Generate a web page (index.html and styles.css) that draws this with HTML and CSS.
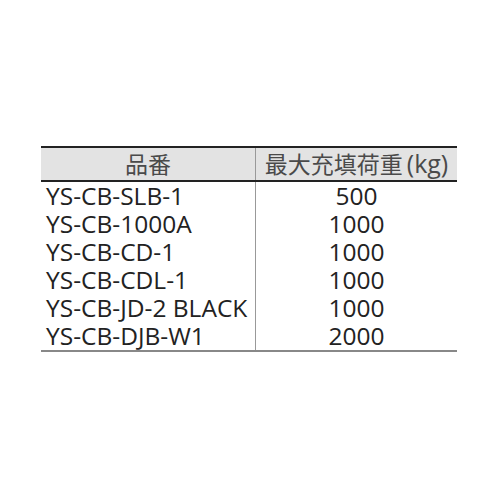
FILE: index.html
```html
<!DOCTYPE html>
<html lang="ja">
<head>
<meta charset="utf-8">
<link rel="stylesheet" href="styles.css">
</head>
<body>
<div class="page">
<table class="spec">
<thead>
<tr><th class="c1">品番</th><th class="c2">最大充填荷重<span class="unit">(kg)</span></th></tr>
</thead>
<tbody>
<tr><td class="c1">YS-CB-SLB-1</td><td class="c2">500</td></tr>
<tr><td class="c1">YS-CB-1000A</td><td class="c2">1000</td></tr>
<tr><td class="c1">YS-CB-CD-1</td><td class="c2">1000</td></tr>
<tr><td class="c1">YS-CB-CDL-1</td><td class="c2">1000</td></tr>
<tr><td class="c1">YS-CB-JD-2 BLACK</td><td class="c2">1000</td></tr>
<tr><td class="c1">YS-CB-DJB-W1</td><td class="c2">2000</td></tr>
</tbody>
</table>
</div>
</body>
</html>
```
FILE: styles.css
```css
html, body {
  margin: 0;
  padding: 0;
  background: #fff;
}
.page {
  width: 500px;
  height: 500px;
  padding: 146px 0 0 41px;
  box-sizing: border-box;
}
.spec {
  border-collapse: collapse;
  width: 416px;
  font-family: "Open Sans", "Noto Sans CJK JP", sans-serif;
  font-size: 24.5px;
  color: #222;
  table-layout: fixed;
}
.spec th {
  background: #e3e3e3;
  font-weight: normal;
  font-size: 23px;
  color: #4a4a4a;
  height: 31px;
  padding: 0;
  border-top: 2px solid #222;
  border-bottom: 2px solid #222;
  text-align: center;
  line-height: 31px;
}
.unit {
  font-size: 25px;
  margin-left: 4px;
}
.spec td {
  height: 28px;
  padding: 0;
  line-height: 28px;
}
.spec .c1 {
  width: 214px;
  text-align: left;
  padding-left: 5px;
}
.spec th.c1 {
  text-align: center;
  padding-left: 0;
  border-right: 1px solid #999;
}
.spec td.c1 {
  border-right: 1px solid #999;
}
.spec .c2 {
  text-align: center;
}
.spec tbody tr:last-child td {
  border-bottom: 2px solid #888;
}
```
